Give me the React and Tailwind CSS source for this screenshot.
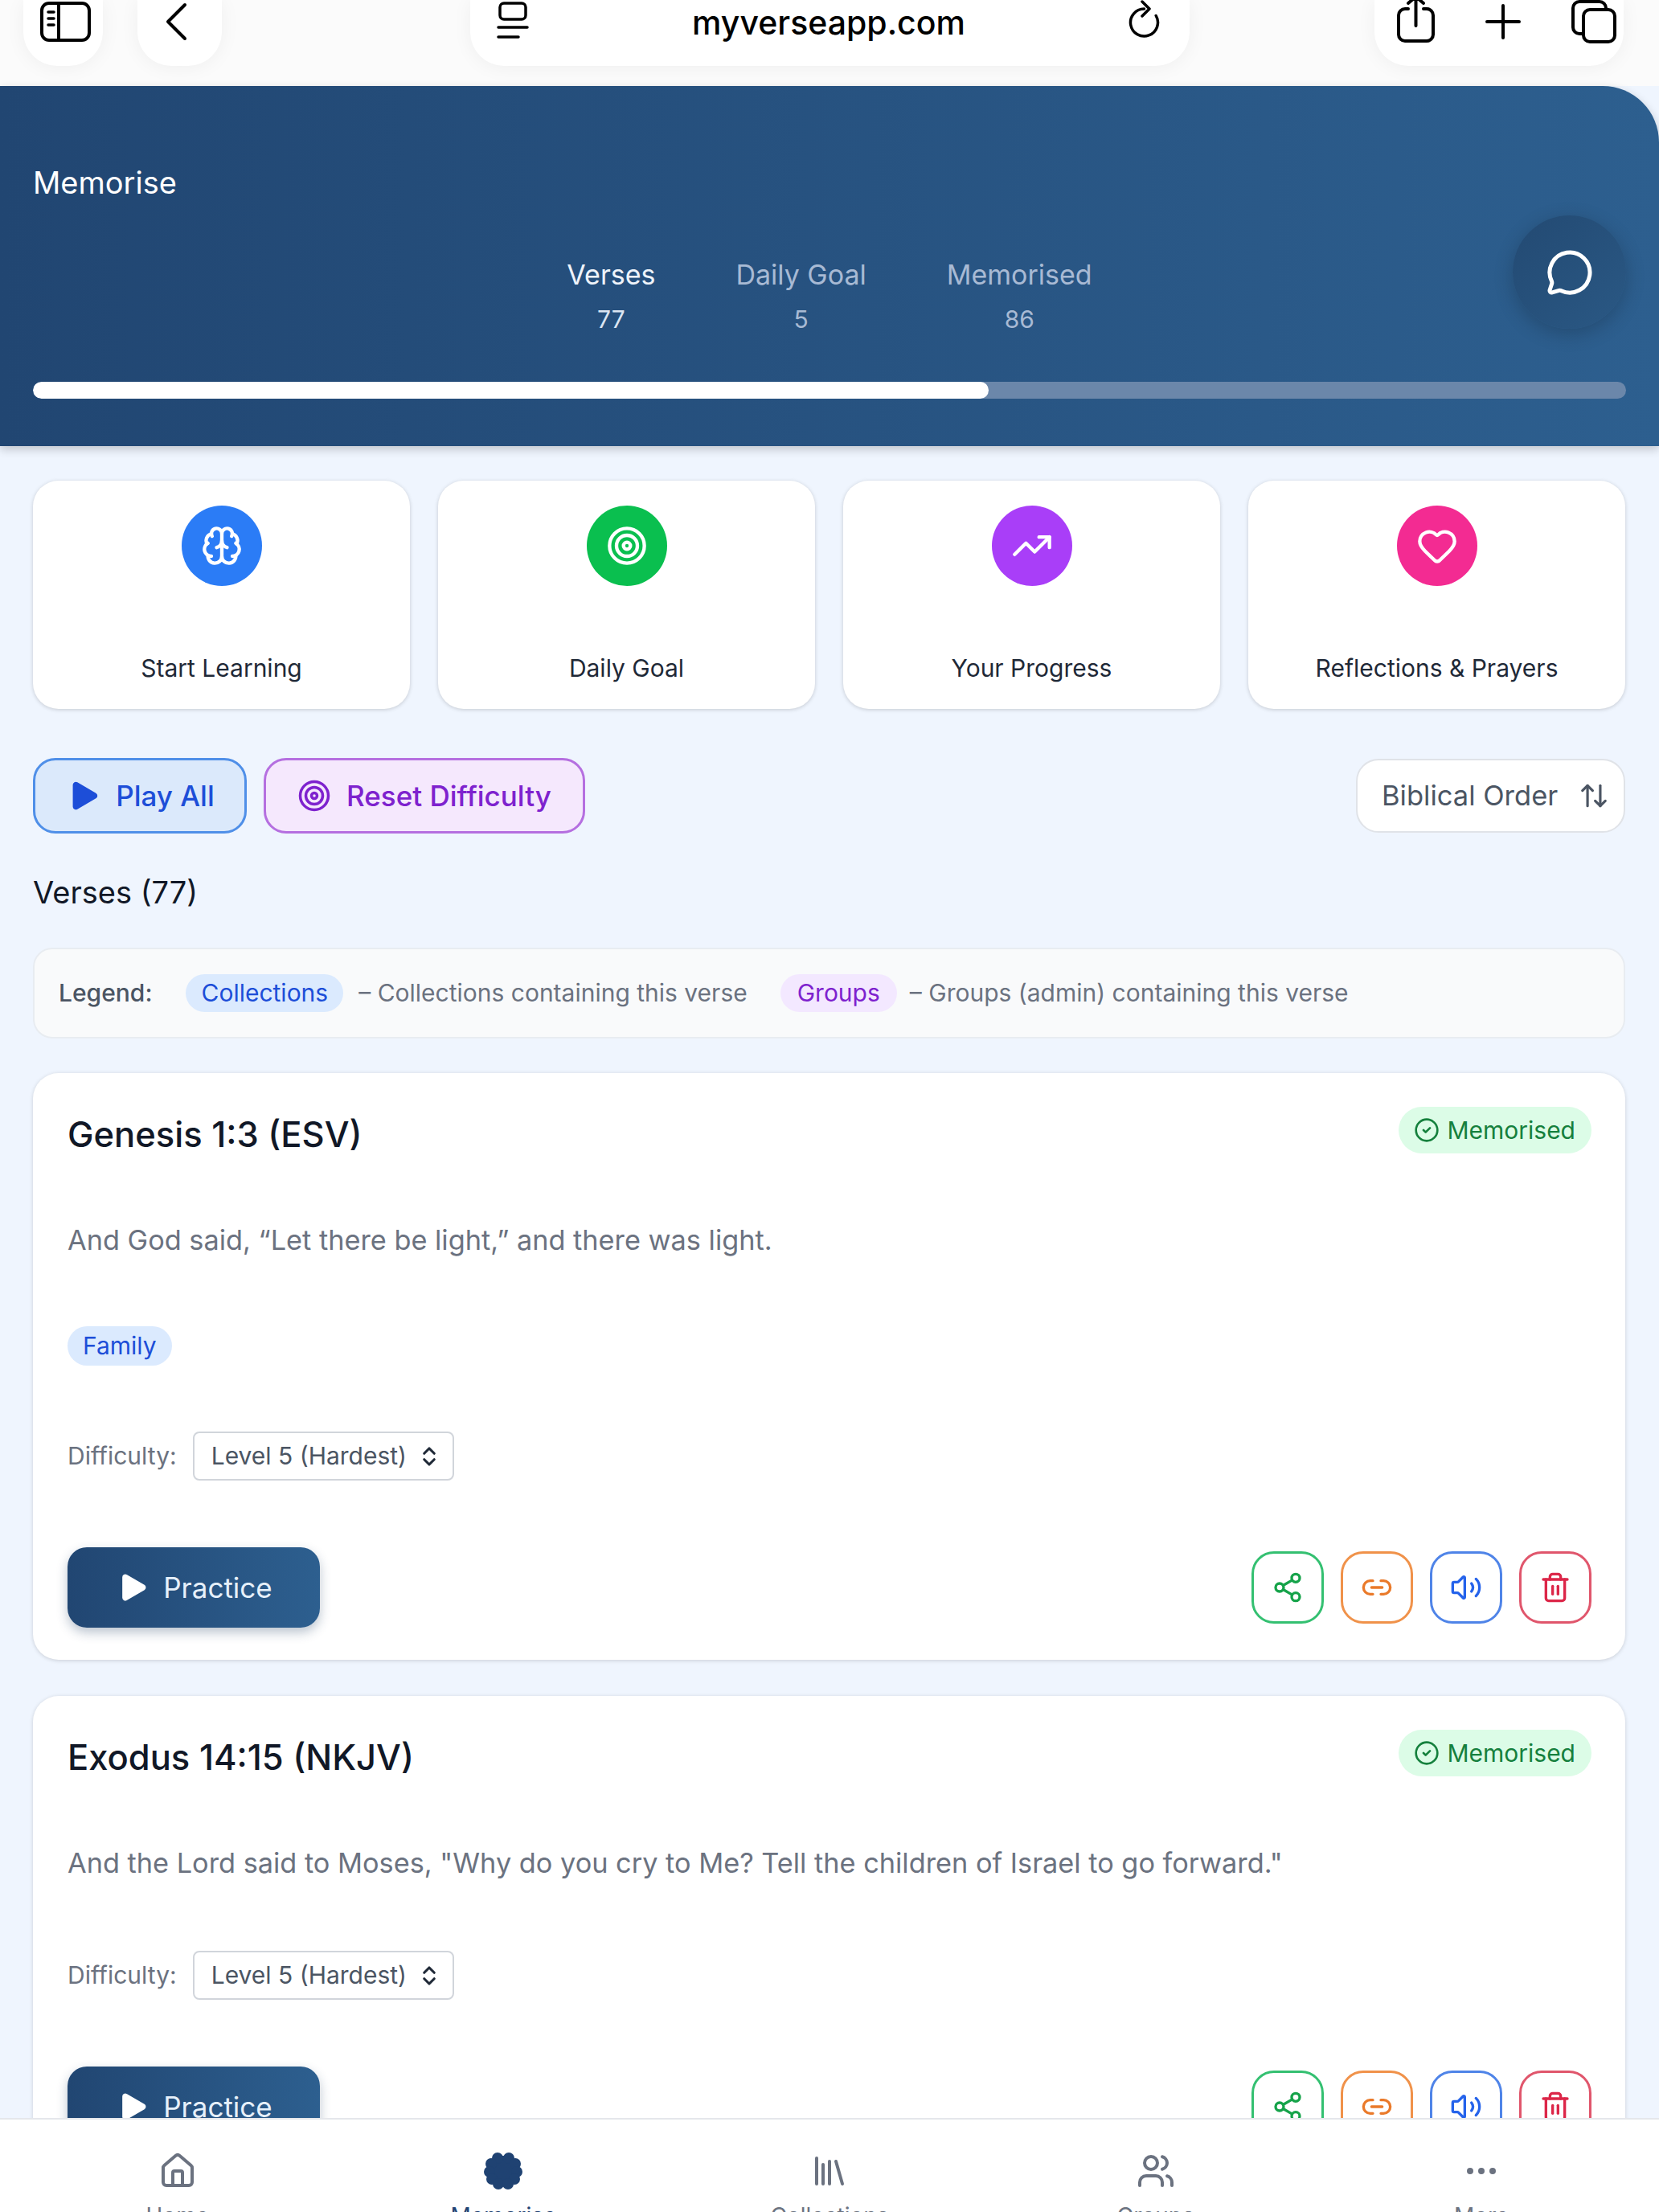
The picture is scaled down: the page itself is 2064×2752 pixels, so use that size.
import React from "react";
import {
  ArrowUpDown,
  Brain,
  ChevronsUpDown,
  CircleCheck,
  Ellipsis,
  Heart,
  House,
  Library,
  Link2,
  MessageCircle,
  Play,
  Share2,
  Target,
  Trash2,
  TrendingUp,
  Users,
  Volume2,
} from "lucide-react";

const quickCards = [
  { label: "Start Learning", icon: Brain, color: "bg-[#2b7cf6]" },
  { label: "Daily Goal", icon: Target, color: "bg-[#0abf4f]" },
  { label: "Your Progress", icon: TrendingUp, color: "bg-[#a93ef8]" },
  { label: "Reflections & Prayers", icon: Heart, color: "bg-[#f32b92]" },
];

const verses = [
  {
    title: "Genesis 1:3 (ESV)",
    text: "And God said, “Let there be light,” and there was light.",
    tags: ["Family"],
  },
  {
    title: "Exodus 14:15 (NKJV)",
    text: 'And the Lord said to Moses, "Why do you cry to Me? Tell the children of Israel to go forward."',
    tags: [],
  },
];

const actions = [
  { icon: Share2, className: "border-[#34c071] text-[#16a34a]" },
  { icon: Link2, className: "border-[#f0924a] text-[#ea7a2a]" },
  { icon: Volume2, className: "border-[#4f84e8] text-[#2563eb]" },
  { icon: Trash2, className: "border-[#e0566c] text-[#dc2648]" },
];

// filled brain shape used on the active tab
const BrainBlob = () => (
  <svg width="48" height="48" viewBox="0 0 48 48" fill="currentColor">
    <circle cx="24" cy="24" r="19" />
    <circle cx="17" cy="8" r="7" />
    <circle cx="31" cy="8" r="7" />
    <circle cx="9" cy="15" r="7" />
    <circle cx="39" cy="15" r="7" />
    <circle cx="7" cy="25" r="7" />
    <circle cx="41" cy="25" r="7" />
    <circle cx="10" cy="34" r="7" />
    <circle cx="38" cy="34" r="7" />
    <circle cx="18" cy="40" r="7" />
    <circle cx="30" cy="40" r="7" />
  </svg>
);

const navItems = [
  { label: "Home", icon: House },
  { label: "Memorise", icon: BrainBlob, active: true },
  { label: "Collections", icon: Library },
  { label: "Groups", icon: Users },
  { label: "More", icon: Ellipsis },
];

const pill = "h-[82px] bg-white shadow-[0_2px_24px_rgba(0,0,0,0.05)] rounded-b-[42px]";

const BrowserBar = () => (
  <div className="h-[107px] bg-[#fbfbfb] overflow-hidden flex pl-[29px] text-black">
    <div className={pill + " w-[99px] pl-[21px] pt-[2px]"}>
      <svg width="63" height="50" viewBox="0 0 63 50" fill="none" stroke="currentColor" strokeWidth="4" strokeLinecap="round">
        <rect x="2" y="2" width="59" height="46" rx="9" />
        <path d="M23 2v46" />
        <path d="M10 13h7M10 21h7M10 29h7" strokeWidth="3.5" />
      </svg>
    </div>
    <div className={pill + " ml-[43px] w-[105px] pl-[35px] pt-[3px]"}>
      <svg width="27" height="48" viewBox="0 0 27 48" fill="none" stroke="currentColor" strokeWidth="4" strokeLinecap="round" strokeLinejoin="round">
        <path d="M24 3 3 24l21 21" />
      </svg>
    </div>
    <div className={pill + " ml-[309px] w-[895px] pl-[33px] pr-[37px] flex justify-between items-start"}>
      <svg width="40" height="48" viewBox="0 0 40 48" fill="none" stroke="currentColor" strokeWidth="3.5" strokeLinecap="round" className="mt-[1px]">
        <rect x="4" y="3" width="32" height="20" rx="5" />
        <path d="M2 33h36M2 45h25" />
      </svg>
      <span className="text-[41px] leading-[56px] font-medium">myverseapp.com</span>
      <svg width="39" height="48" viewBox="0 0 39 48" fill="none" stroke="currentColor" strokeWidth="3.5" strokeLinecap="round" strokeLinejoin="round">
        <path d="M34.2 19.5A17 17 0 1 1 19.5 11" />
        <path d="M17 2l9 9-9 9" />
      </svg>
    </div>
    <div className={pill + " ml-[230px] w-[310px] pl-[28px] pr-[9px] flex justify-between items-start"}>
      <svg width="47" height="54" viewBox="0 0 47 54" fill="none" stroke="currentColor" strokeWidth="4" strokeLinecap="round" strokeLinejoin="round">
        <path d="M14 11H10a8 8 0 0 0-8 8v24a8 8 0 0 0 8 8h27a8 8 0 0 0 8-8V19a8 8 0 0 0-8-8h-4" />
        <path d="M23.5 -4v36M14 4l9.5-8L33 4" />
      </svg>
      <svg width="44" height="44" viewBox="0 0 44 44" fill="none" stroke="currentColor" strokeWidth="4" strokeLinecap="round" className="mt-[5px]">
        <path d="M22 2v40M2 22h40" />
      </svg>
      <svg width="56" height="54" viewBox="0 0 56 54" fill="none" stroke="currentColor" strokeWidth="4" strokeLinejoin="round">
        <path d="M14 42H10a8 8 0 0 1-8-8V10a8 8 0 0 1 8-8h25a8 8 0 0 1 8 8v2" />
        <rect x="15" y="12" width="39" height="40" rx="8" />
      </svg>
    </div>
  </div>
);

const Header = () => (
  <div className="relative h-[448px] rounded-tr-[70px] bg-gradient-to-r from-[#214672] to-[#2d5f8f] pl-[41px] pr-[41px] pt-[96px] shadow-[0_4px_12px_rgba(0,0,0,0.2)]">
    <h1 className="text-[38px] leading-[48px] text-white">Memorise</h1>

    <div className="mt-[69px] flex justify-center gap-[100px] text-center">
      <div>
        <div className="text-[34px] leading-[44px] text-[#eef3fa]">Verses</div>
        <div className="mt-[15px] text-[30px] leading-[36px] text-[#dbe5f2]">77</div>
      </div>
      <div>
        <div className="text-[34px] leading-[44px] text-[#a8bad4]">Daily Goal</div>
        <div className="mt-[15px] text-[30px] leading-[36px] text-[#a8bad4]">5</div>
      </div>
      <div>
        <div className="text-[34px] leading-[44px] text-[#a8bad4]">Memorised</div>
        <div className="mt-[15px] text-[30px] leading-[36px] text-[#a8bad4]">86</div>
      </div>
    </div>

    <div className="mt-[60px] h-[21px] rounded-full bg-[#6b87aa] overflow-hidden">
      <div className="h-full w-[60%] rounded-full bg-white"></div>
    </div>

    <button className="absolute right-[41px] top-[161px] w-[141px] h-[141px] rounded-full bg-gradient-to-br from-[#234a73] to-[#2a5884] shadow-[0_6px_24px_rgba(0,0,0,0.2)] flex items-center justify-center text-white">
      <MessageCircle size={60} strokeWidth={2} />
    </button>
  </div>
);

const VerseCard = ({ verse }) => (
  <div className="mb-[45px] rounded-[32px] bg-white pl-[43px] pr-[42px] pt-[42px] pb-[40px] shadow-[0_1px_5px_rgba(0,0,0,0.16)]">
    <div className="flex items-start justify-between">
      <h3 className="mt-[6px] text-[43.5px] leading-[56px] font-medium text-[#111827]">{verse.title}</h3>
      <span className="h-[58px] rounded-full bg-[#dcfce7] pl-[19px] pr-[20px] flex items-center gap-[9px] text-[30px] text-[#15803d]">
        <CircleCheck size={32} strokeWidth={2} />
        Memorised
      </span>
    </div>

    <p className="mt-[77px] text-[34.3px] leading-[54px] text-[#6b7280]">{verse.text}</p>

    {verse.tags.length > 0 && (
      <div className="mt-[80px] flex gap-3">
        {verse.tags.map((tag) => (
          <span key={tag} className="h-[49px] rounded-full bg-[#dbeafe] px-[19px] flex items-center text-[30px] text-[#1d4ed8]">
            {tag}
          </span>
        ))}
      </div>
    )}

    <div className="mt-[82px] flex items-center gap-[20px]">
      <span className="text-[30px] text-[#6b7280]">Difficulty:</span>
      <div className="h-[61px] w-[325px] rounded-[8px] border-2 border-[#d1d5db] bg-white pl-[21px] pr-[14px] flex items-center justify-between text-[30px] text-[#4b5563]">
        Level 5 (Hardest)
        <ChevronsUpDown size={30} strokeWidth={2.5} className="text-[#1f2937]" />
      </div>
    </div>

    <div className="mt-[83px] flex items-center justify-between">
      <button className="h-[100px] w-[314px] rounded-[24px] bg-gradient-to-r from-[#214672] to-[#2d5f8f] flex items-center justify-center gap-[16px] text-[35px] text-[#e6f0fa] shadow-[0_6px_14px_rgba(30,58,95,0.3)]">
        <Play size={44} fill="white" strokeWidth={0} className="text-white" />
        Practice
      </button>
      <div className="flex gap-[21px]">
        {actions.map(({ icon: Icon, className }, i) => (
          <button key={i} className={"w-[90px] h-[90px] rounded-[28px] border-[3px] flex items-center justify-center " + className}>
            <Icon size={40} strokeWidth={2} />
          </button>
        ))}
      </div>
    </div>
  </div>
);

const BottomNav = () => (
  <div className="absolute bottom-0 left-0 right-0 h-[117px] bg-white border-t-2 border-[#e5e7eb] px-[18px] grid grid-cols-5">
    {navItems.map(({ label, icon: Icon, active }) => (
      <div key={label} className={"flex flex-col items-center pt-[40px] " + (active ? "text-[#1f4272]" : "text-[#6b7280]")}>
        <Icon size={48} strokeWidth={2} />
        <span className="mt-[15px] text-[28px] leading-[34px] whitespace-nowrap">{label}</span>
      </div>
    ))}
  </div>
);

export default function App() {
  return (
    <div className="relative h-[2752px] w-full overflow-hidden bg-[#eff5fe] font-['Inter',sans-serif]">
      <BrowserBar />
      <Header />

      <div className="pl-[41px] pr-[42px] pt-[43px]">
        {/* Quick actions */}
        <div className="grid grid-cols-4 gap-[35px]">
          {quickCards.map(({ label, icon: Icon, color }) => (
            <div key={label} className="h-[284px] rounded-[32px] bg-white pt-[31px] flex flex-col items-center shadow-[0_1px_5px_rgba(0,0,0,0.18)]">
              <div className={"w-[100px] h-[100px] rounded-full flex items-center justify-center text-white " + color}>
                <Icon size={52} strokeWidth={2} />
              </div>
              <div className="mt-[84px] text-[30px] leading-[36px] text-[#1f2937]">{label}</div>
            </div>
          ))}
        </div>

        {/* Toolbar */}
        <div className="mt-[61px] flex items-center justify-between">
          <div className="flex gap-[21px]">
            <button className="h-[94px] w-[266px] rounded-[28px] border-[3px] border-[#4f8fe8] bg-[#dbe9fb] flex items-center justify-center gap-[17px] text-[35px] font-medium text-[#1d4ed8]">
              <Play size={46} fill="currentColor" strokeWidth={0} />
              Play All
            </button>
            <button className="h-[94px] w-[400px] rounded-[28px] border-[3px] border-[#b56fe0] bg-[#f5e8fd] flex items-center justify-center gap-[19px] text-[35px] font-medium text-[#7e22ce]">
              <Target size={42} strokeWidth={2} />
              Reset Difficulty
            </button>
          </div>
          <button className="h-[92px] w-[335px] rounded-[28px] border-2 border-[#e0e3e8] bg-white flex items-center justify-between pl-[30px] pr-[18px] text-[34.5px] text-[#4b5563]">
            Biblical Order
            <ArrowUpDown size={38} strokeWidth={2} />
          </button>
        </div>

        <h2 className="mt-[49px] text-[38px] leading-[48px] text-[#111827]">Verses (77)</h2>

        {/* Legend */}
        <div className="mt-[45px] h-[113px] rounded-[24px] border-2 border-[#e8ecf1] bg-[#f9fafb] pl-[30px] flex items-center text-[30px] text-[#6b7280]">
          <span className="font-medium text-[#4b5563]">Legend:</span>
          <span className="ml-[42px] h-[47px] rounded-full bg-[#dbeafe] px-[19px] flex items-center text-[#1d4ed8]">Collections</span>
          <span className="ml-[19px]">– Collections containing this verse</span>
          <span className="ml-[41px] h-[47px] rounded-full bg-[#f3e8ff] px-[21px] flex items-center text-[#7e22ce]">Groups</span>
          <span className="ml-[16px]">– Groups (admin) containing this verse</span>
        </div>

        {/* Verse list */}
        <div className="mt-[43px]">
          {verses.map((verse) => (
            <VerseCard key={verse.title} verse={verse} />
          ))}
        </div>
      </div>

      <BottomNav />
    </div>
  );
}
